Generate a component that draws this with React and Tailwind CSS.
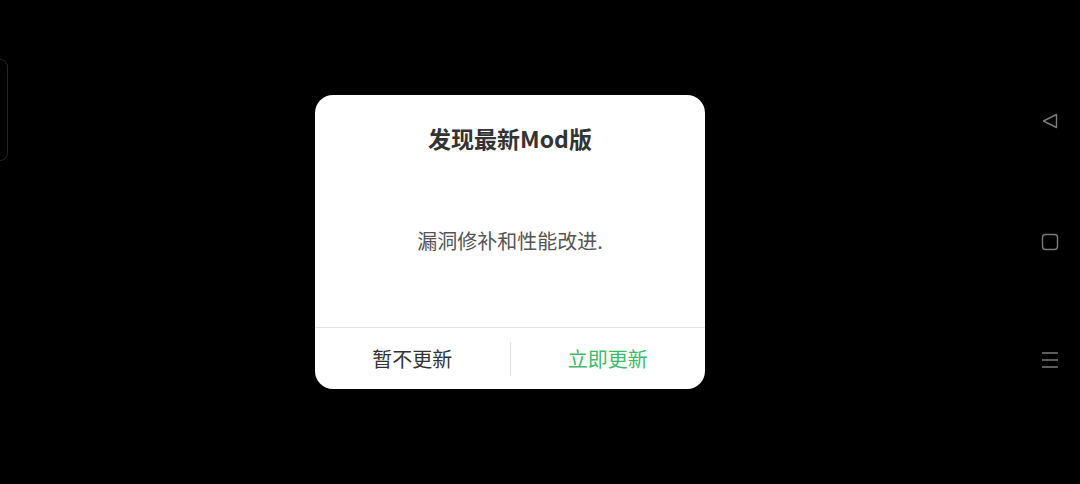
import React from 'react';

const cjk = { fontFamily: '"Noto Sans CJK SC", "Noto Sans", sans-serif' };

const NavBar = () => (
  <div className="ml-auto flex w-[60px] shrink-0 flex-col items-center text-[#7a7a7a]">
    <svg className="mt-[112px]" width="18" height="18" viewBox="0 0 18 18" fill="none">
      <path d="M15.5 2.5 L15.5 15.5 L2.5 9 Z" stroke="currentColor" strokeWidth="1.4" strokeLinejoin="round" />
    </svg>
    <svg className="mt-[103px]" width="18" height="18" viewBox="0 0 18 18" fill="none">
      <rect x="1.5" y="1.5" width="15" height="15" rx="3" stroke="currentColor" strokeWidth="1.4" />
    </svg>
    <svg className="mt-[100px]" width="18" height="18" viewBox="0 0 18 18" fill="none">
      <path d="M1 2h16M1 9h16M1 16h16" stroke="currentColor" strokeWidth="1.4" />
    </svg>
  </div>
);

export default function App() {
  return (
    <div className="flex h-[484px] w-[1080px] items-start overflow-hidden bg-black" style={cjk}>
      {/* side tab peeking out from the left edge */}
      <div className="-ml-[12px] mt-[59px] h-[102px] w-[20px] shrink-0 rounded-[8px] border-[1.5px] border-[#262626]" />

      <div className="ml-[307px] mt-[95px] flex w-[390px] shrink-0 flex-col rounded-[18px] bg-white">
        <div className="pt-[28px] text-center text-[23px] font-bold leading-[30px] text-[#333333]">
          发现最新Mod版
        </div>
        <div className="mt-[74px] mb-[72px] text-center text-[20px] leading-[28px] text-[#555555]">
          漏洞修补和性能改进.
        </div>
        <div className="flex h-[62px] items-center border-t border-[#e3e3e3]">
          <button className="flex-1 text-center text-[20px] leading-[28px] text-[#333333]">暂不更新</button>
          <div className="h-[34px] w-px bg-[#e3e3e3]" />
          <button className="flex-1 text-center text-[20px] leading-[28px] text-[#3dba6a]">立即更新</button>
        </div>
      </div>

      <NavBar />
    </div>
  );
}
